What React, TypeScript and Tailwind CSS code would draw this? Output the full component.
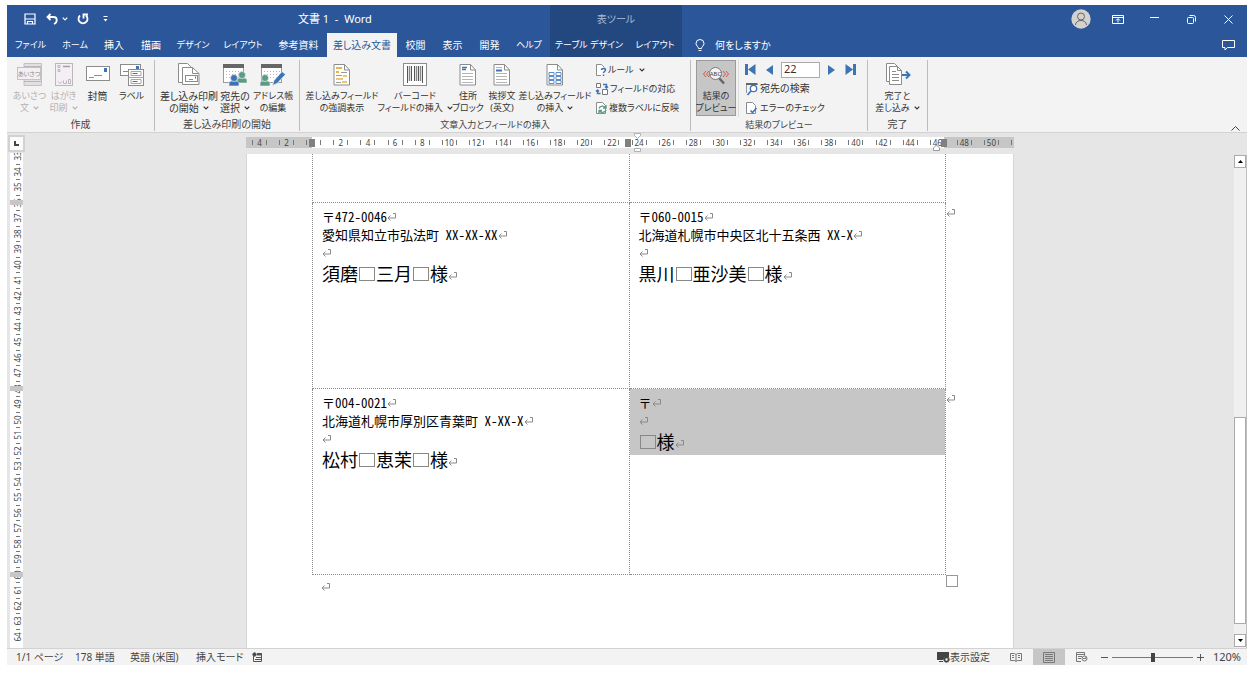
import type { ReactNode } from 'react';

const UI_FONT = "font-['Noto_Sans','Noto_Sans_CJK_JP',sans-serif] [font-feature-settings:'palt']";

/* ---------- shared small glyphs ---------- */

function Caret() {
  return (
    <svg className="ml-1 inline-block shrink-0" width="6" height="4" viewBox="0 0 6 4" fill="none" stroke="currentColor" strokeWidth="1.200">
      <path d="M.7.7 3 3 5.300.7" />
    </svg>
  );
}

function Return() {
  return (
    <svg className="inline-block align-[1px]" width="9" height="8" viewBox="0 0 9 8" fill="none" stroke="#8a8a8a">
      <path d="M6 .5h2.500v4.500H1M3.500 2.500 1 5l2.500 2.500" />
    </svg>
  );
}

function WideSpace() {
  return <span className="mx-px inline-block h-[14px] w-4 border border-[#888] align-baseline" />;
}

/* ---------- ribbon icons ---------- */

function Sheet({ children }: { children?: ReactNode }) {
  return (
    <svg width="18" height="24" viewBox="0 0 18 24" fill="none">
      <path d="M1 1.500h10.500L16.500 7v15H1z" fill="#fff" stroke="#8c8c8c" />
      <path d="M11.500 1.500V7h5" stroke="#8c8c8c" />
      {children}
    </svg>
  );
}

function GreetingIcon() {
  return (
    <svg width="26" height="26" viewBox="0 0 26 26" fill="none">
      <path d="M7 1.500h17.500v22H7z" fill="#e2e0e2" stroke="#c4c0c4" />
      <path d="M7 19.500h17.500M7 4.500h17.500" stroke="#b9b5b9" />
      <rect x=".5" y="5.500" width="23" height="12" fill="#f3eff3" stroke="#c4c0c4" />
      <text x="12" y="14" fontSize="6" textAnchor="middle" fill="#8d878d">あいさつ</text>
    </svg>
  );
}

function PostcardIcon() {
  return (
    <svg width="20" height="26" viewBox="0 0 20 26" fill="none" stroke="#bdb6bd">
      <rect x="1.500" y="1.500" width="17" height="22" fill="#f3eff3" />
      <path d="M4 3.500h2v2H4zM4 7.500h2v2H4z" />
      <path d="M9 4.500h7" stroke="#a59fa5" strokeWidth="1.500" />
      <path d="M4 19.500l2 2 2-2M9.500 18.500v3h3v-3M14.500 17.500h2v4h-2z" />
    </svg>
  );
}

function EnvelopeIcon() {
  return (
    <svg width="24" height="26" viewBox="0 0 24 26" fill="none">
      <rect x=".5" y="4.500" width="23" height="14" fill="#fff" stroke="#8c8c8c" />
      <rect x="18" y="6" width="3" height="4" fill="#3d74b5" />
      <path d="M8 13.500h8M3 15.500h5" stroke="#8c8c8c" />
    </svg>
  );
}

function LabelsIcon() {
  return (
    <svg width="26" height="26" viewBox="0 0 26 26" fill="none">
      <rect x="1.500" y="2.500" width="20" height="11" fill="#fff" stroke="#8c8c8c" />
      <rect x="17" y="4" width="3" height="3" fill="#3d74b5" />
      <path d="M4 9.500h5" stroke="#8c8c8c" />
      <rect x="9.500" y="7.500" width="15" height="16" fill="#fff" stroke="#8c8c8c" />
      <path d="M9.500 15.500h15M12 9.500h10v4H12zM12 17.500h10v4H12z" stroke="#a6a6a6" />
      <path d="M13.500 11.500h5M13.500 19.500h5" stroke="#3d74b5" />
    </svg>
  );
}

function StartMergeIcon() {
  return (
    <svg width="24" height="26" viewBox="0 0 24 26" fill="none" stroke="#8c8c8c">
      <path d="M1.500 1.500h9l4 4v15h-13z" fill="#fff" />
      <path d="M5.500 5.500h10l6.500 6v11H5.500z" fill="#fff" />
      <path d="M15.500 5.500v6H22" />
      <rect x="8.500" y="13.500" width="12" height="6" fill="#fff" />
      <path d="M12 17.500h4" />
      <path d="M18.500 14.500v2" stroke="#3d74b5" />
    </svg>
  );
}

function GridBase() {
  return (
    <>
      <rect x="1.500" y="3.500" width="20" height="17" fill="#fff" stroke="#9a9a9a" />
      <path d="M1 2h21v4H1z" fill="#666" />
      <path d="M4 9.500h16M4 12.500h16M4 15.500h16" stroke="#b5b5b5" strokeDasharray="1 2" />
    </>
  );
}

function Person({ x, y, fill }: { x: number; y: number; fill: string }) {
  return (
    <g fill={fill} stroke="#f3f3f3" strokeWidth=".6" transform={`translate(${x} ${y})`}>
      <path d="M0 12V9.500C0 7.500 1.500 7 3 7h4c1.500 0 3 .5 3 2.500V12z" />
      <circle cx="5" cy="4" r="3.500" />
    </g>
  );
}

function RecipientsIcon() {
  return (
    <svg width="26" height="26" viewBox="0 0 26 26" fill="none">
      <GridBase />
      <Person x={15} y={9} fill="#5a9b81" />
      <Person x={7} y={12} fill="#3d74b5" />
    </svg>
  );
}

function EditListIcon() {
  return (
    <svg width="26" height="26" viewBox="0 0 26 26" fill="none">
      <GridBase />
      <Person x={0} y={12} fill="#5a9b81" />
      <path d="M12.500 23.500l1.500-5 8-9 3.500 3-8.500 9z" fill="#3d74b5" stroke="#f3f3f3" strokeWidth=".7" />
    </svg>
  );
}

function HighlightIcon() {
  return (
    <Sheet>
      <path d="M3 5h6M3 9h3" stroke="#e9b347" strokeWidth="2" />
      <path d="M8 9.500h6M3 12.500h6M3 19.500h5" stroke="#9a9a9a" />
      <path d="M10 13h4M3 16h7M9 19h5" stroke="#e9b347" strokeWidth="1.500" />
    </Sheet>
  );
}

function BarcodeIcon() {
  return (
    <svg width="24" height="26" viewBox="0 0 24 26" fill="none">
      <rect x=".5" y="1.500" width="23" height="22" fill="#fff" stroke="#8c8c8c" />
      <path d="M4.500 4v17M8.500 4v15M11.500 4v15M15.500 4v15M19.500 4v17" stroke="#555" />
      <path d="M6.500 4v15M13.500 4v15M17.500 4v15" stroke="#888" strokeWidth="1.500" />
    </svg>
  );
}

function AddressIcon() {
  return (
    <Sheet>
      <path d="M3 4.500h5M3 6.500h4" stroke="#3d74b5" strokeWidth="1.500" />
      <path d="M3 10.500h11M3 13.500h11M3 16.500h11M3 19.500h11" stroke="#b5b5b5" />
    </Sheet>
  );
}

function GreetingLineIcon() {
  return (
    <Sheet>
      <path d="M3 7.500h6" stroke="#3d74b5" strokeWidth="2" />
      <path d="M3 4.500h6M3 10.500h11M3 13.500h11M3 16.500h11M3 19.500h11" stroke="#b5b5b5" />
    </Sheet>
  );
}

function MergeFieldIcon() {
  return (
    <Sheet>
      <path d="M3 9.500h5v3H3zM10 9.500h5v3h-5zM3 13.500h5v3H3zM10 13.500h5v3h-5zM3 17.500h5v3H3zM10 17.500h5v3h-5z" stroke="#5b8fc9" />
    </Sheet>
  );
}

function PreviewIcon() {
  return (
    <svg width="28" height="26" viewBox="0 0 28 26" fill="none">
      <path d="M4 9 1.500 12 4 15M7 9l-2.500 3L7 15M21 9l2.500 3-2.500 3M24 9l2.500 3-2.500 3" stroke="#e0523f" />
      <path d="M17 16l5 5.500" stroke="#666" strokeWidth="2.500" />
      <circle cx="13.500" cy="11.500" r="6" fill="#f3f3f3" stroke="#777" />
      <text x="13.500" y="14" fontSize="6" textAnchor="middle" fill="#444">ABC</text>
    </svg>
  );
}

function FinishIcon() {
  return (
    <svg width="28" height="26" viewBox="0 0 28 26" fill="none" stroke="#8c8c8c">
      <path d="M2.500 1.500h8l3 3v15h-11z" fill="#fff" />
      <path d="M5.500 4.500h8l4 4v14h-12z" fill="#fff" />
      <path d="M13.500 4.500v4h4M8 9.500h4M8 12.500h7M8 15.500h7M8 18.500h7" />
      <path d="M18 13h7M22 9.500l3.500 3.500-3.500 3.500" stroke="#3d74b5" strokeWidth="2" />
    </svg>
  );
}

function RulesIcon() {
  return (
    <svg className="shrink-0" width="12" height="14" viewBox="0 0 12 14" fill="none">
      <path d="M6 12.500H1.500v-11h5l3 3" fill="#fff" stroke="#8c8c8c" />
      <path d="M6.500 7c0-2 4-2 4 0 0 1.500-2 1.500-2 3M8.500 11.500v1.500" stroke="#3d74b5" strokeWidth="1.500" />
    </svg>
  );
}

function MatchIcon() {
  return (
    <svg className="shrink-0" width="14" height="14" viewBox="0 0 14 14" fill="none">
      <path d="M1.500 1.500h4v4h-4zM7.500 7.500h5v5h-5z" fill="#fff" stroke="#777" />
      <path d="M8 2.500h3.500V6M10 4.500 11.500 6 13 4.500M5.500 11.500h-3V8M1 9.500 2.500 8 4 9.500" stroke="#3d74b5" strokeWidth="1.400" />
    </svg>
  );
}

function UpdateIcon() {
  return (
    <svg className="shrink-0" width="13" height="14" viewBox="0 0 13 14" fill="none">
      <path d="M1.500 1.500h6l3 3v8h-9z" fill="#fff" stroke="#8c8c8c" />
      <path d="M4 7.500c1-3 5-3 6.500-1M11 4v3H8M11 9c-1 3-5 3-6.500 1M4 12.500v-3h3" stroke="#5a9b81" strokeWidth="1.300" />
    </svg>
  );
}

function FindIcon() {
  return (
    <svg className="shrink-0" width="14" height="14" viewBox="0 0 14 14" fill="none">
      <path d="M1.500 11V2.500h11" stroke="#999" />
      <path d="M1 2h11.500" stroke="#666" strokeWidth="2" />
      <circle cx="8.500" cy="6.500" r="3.200" fill="#fff" stroke="#3d74b5" strokeWidth="1.300" />
      <path d="M6 9l-3.500 4" stroke="#3d74b5" strokeWidth="1.700" />
    </svg>
  );
}

function CheckIcon() {
  return (
    <svg className="shrink-0" width="14" height="14" viewBox="0 0 14 14" fill="none">
      <path d="M1.500 1.500h6l3 3v8h-9z" fill="#fff" stroke="#8c8c8c" />
      <path d="M5.500 9.500l2 2L11.500 7" stroke="#3d74b5" strokeWidth="1.600" />
    </svg>
  );
}

/* ---------- title bar and tabs ---------- */

function TitleBar() {
  return (
    <div className="flex h-7 items-center text-white">
      <div className="flex w-[291px] items-center pl-[17px]">
        <button aria-label="上書き保存">
          <svg width="12" height="12" viewBox="0 0 12 12" fill="none" stroke="#fff" strokeWidth="1.200">
            <path d="M1 1h10v10H1zM1 6h10M3.500 11V8.500h5V11" />
          </svg>
        </button>
        <button aria-label="元に戻す" className="ml-[10px] flex items-center">
          <svg width="12" height="12" viewBox="0 0 12 12" fill="none" stroke="#fff" strokeWidth="1.800">
            <path d="M4.500 1 1.500 4l3 3M1.500 4h6c4.500 0 4 5.500.5 7" />
          </svg>
          <Caret />
        </button>
        <button aria-label="やり直し" className="ml-[9px]">
          <svg width="12" height="12" viewBox="0 0 12 12" fill="none" stroke="#fff" strokeWidth="1.800">
            <path d="M3 2.500a4.500 4.500 0 1 0 6 0M6.500 5.500V1.500H11" />
          </svg>
        </button>
        <button aria-label="クイック アクセス ツール バーのユーザー設定" className="ml-[14px]">
          <svg width="5" height="6" viewBox="0 0 5 6" fill="#fff">
            <path d="M.5 0h4v1h-4zM.5 3h4l-2 2.500z" />
          </svg>
        </button>
      </div>
      <h1 className="w-[252px] text-[11px] whitespace-pre">文書 1  -  Word</h1>
      <div className="flex h-full w-[132px] items-center justify-center bg-[#23477f] text-[10px] text-[#a9bbd8]">表ツール</div>
      <div className="ml-auto flex items-center pr-[14px]">
        <button aria-label="アカウント" className="mr-[21px]">
          <svg width="20" height="20" viewBox="0 0 20 20" fill="none">
            <circle cx="10" cy="10" r="9.700" fill="#d4d2d0" />
            <circle cx="10" cy="7.500" r="3.500" stroke="#666" />
            <path d="M4.500 16c0-6 11-6 11 0" stroke="#666" />
          </svg>
        </button>
        <button aria-label="リボンの表示オプション" className="mr-[26px]">
          <svg width="12" height="9" viewBox="0 0 12 9" fill="none" stroke="#fff">
            <path d="M.5.5h11v8H.5zM.5 2.500h11M6 7.500V4M4 5.500l2-2 2 2" />
          </svg>
        </button>
        <button aria-label="最小化" className="mr-7">
          <svg width="9" height="9" viewBox="0 0 9 9" stroke="#fff"><path d="M0 2.500h9" /></svg>
        </button>
        <button aria-label="元に戻す (縮小)" className="mr-7">
          <svg width="9" height="9" viewBox="0 0 9 9" fill="none" stroke="#fff">
            <rect x=".5" y="2.500" width="6" height="6" rx="1" />
            <path d="M2.500.5h4a2 2 0 0 1 2 2v4" />
          </svg>
        </button>
        <button aria-label="閉じる">
          <svg width="9" height="9" viewBox="0 0 9 9" stroke="#fff"><path d="M.5.5l8 8M8.500.5l-8 8" /></svg>
        </button>
      </div>
    </div>
  );
}

const TABS = [
  { label: 'ファイル', width: 'w-[47px]', kana: true },
  { label: 'ホーム', width: 'w-[42px]', kana: true },
  { label: '挿入', width: 'w-[36px]' },
  { label: '描画', width: 'w-[38px]' },
  { label: 'デザイン', width: 'w-[46px]', kana: true },
  { label: 'レイアウト', width: 'w-[54px]', kana: true },
  { label: '参考資料', width: 'w-[57px]' },
  { label: '差し込み文書', width: 'w-[70px]', active: true },
  { label: '校閲', width: 'w-[37px]' },
  { label: '表示', width: 'w-[37px]' },
  { label: '開発', width: 'w-[37px]' },
  { label: 'ヘルプ', width: 'w-[42px]', kana: true },
  { label: 'テーブル デザイン', width: 'w-[78px]', context: true, kana: true },
  { label: 'レイアウト', width: 'w-[54px]', context: true, kana: true },
];

function TabRow() {
  return (
    <nav className="flex h-6 text-[10px] text-white">
      {TABS.map((tab, i) => (
        <button
          key={i}
          className={`${tab.width} ${tab.kana ? 'text-[9px]' : 'text-[10px]'} flex shrink-0 items-center justify-center whitespace-nowrap ${
            tab.active ? 'bg-[#f3f3f3] text-[#2b579a]' : tab.context ? 'bg-[#23477f]' : ''
          }`}
        >
          {tab.label}
        </button>
      ))}
      <button className="ml-[13px] flex items-center gap-[10px] whitespace-nowrap">
        <svg width="10" height="13" viewBox="0 0 10 13" fill="none" stroke="#fff">
          <path d="M3.500 9.500C3.500 7.500 1 7 1 4.500a4 4 0 0 1 8 0c0 2.500-2.500 3-2.500 5zM3.500 11.500h3" />
        </svg>
        何をしますか
      </button>
      <button aria-label="コメント" className="mr-3 ml-auto">
        <svg width="13" height="12" viewBox="0 0 13 12" fill="none" stroke="#fff">
          <path d="M.5 1.500h12v7h-7l-2.500 2.500v-2.500H.5z" />
        </svg>
      </button>
    </nav>
  );
}

/* ---------- ribbon ---------- */

interface BigButtonProps {
  icon: ReactNode;
  lines: string[];
  width: string;
  kana?: boolean;
  caret?: boolean;
  disabled?: boolean;
  pressed?: boolean;
}

function BigButton({ icon, lines, width, kana, caret, disabled, pressed }: BigButtonProps) {
  return (
    <button
      disabled={disabled}
      className={`${width} ${kana ? 'text-[9px]' : 'text-[10px]'} flex h-[56px] shrink-0 flex-col items-center border ${
        pressed ? 'border-[#9a9a9a] bg-[#c6c6c6]' : 'border-transparent'
      } ${disabled ? 'text-[#b5b1b5]' : 'text-[#333]'}`}
    >
      <span className="mt-px mb-[2px] flex h-[26px] items-center">{icon}</span>
      {lines.map((line, i) => (
        <span key={line} className="flex h-3 items-center leading-3 whitespace-nowrap">
          {line}
          {caret && i === lines.length - 1 && <Caret />}
        </span>
      ))}
    </button>
  );
}

function SmallButton({ icon, label, kana, caret }: { icon: ReactNode; label: string; kana?: boolean; caret?: boolean }) {
  return (
    <button className={`${kana ? 'text-[9px]' : 'text-[10px]'} flex h-[19px] items-center gap-px whitespace-nowrap text-[#333]`}>
      {icon}
      {label}
      {caret && <Caret />}
    </button>
  );
}

function Group({ label, width, kana, children }: { label: string; width: string; kana?: boolean; children: ReactNode }) {
  return (
    <section className={`${width} flex shrink-0 flex-col border-r border-[#bdbdbd]`}>
      <div className="flex h-[58px] justify-center">{children}</div>
      <h2 className={`${kana ? 'text-[9px]' : 'text-[10px]'} pt-px text-center leading-[14px] text-[#444]`}>{label}</h2>
    </section>
  );
}

function Ribbon() {
  return (
    <div className="flex h-[76px] border-b border-[#d2d2d2] bg-[#f3f3f3] pt-[3px] pb-[1px]">
      <Group label="作成" width="w-[148px]">
        <BigButton icon={<GreetingIcon />} lines={['あいさつ', '文']} width="w-[34px]" kana caret disabled />
        <BigButton icon={<PostcardIcon />} lines={['はがき', '印刷']} width="w-[34px]" kana caret disabled />
        <BigButton icon={<EnvelopeIcon />} lines={['封筒']} width="w-[34px]" />
        <BigButton icon={<LabelsIcon />} lines={['ラベル']} width="w-[34px]" kana />
      </Group>
      <Group label="差し込み印刷の開始" width="w-[145px]">
        <BigButton icon={<StartMergeIcon />} lines={['差し込み印刷', 'の開始']} width="w-[58px]" caret />
        <BigButton icon={<RecipientsIcon />} lines={['宛先の', '選択']} width="w-[34px]" caret />
        <BigButton icon={<EditListIcon />} lines={['アドレス帳', 'の編集']} width="w-[42px]" kana />
      </Group>
      <Group label="文章入力とフィールドの挿入" width="w-[391px]" kana>
        <BigButton icon={<HighlightIcon />} lines={['差し込みフィールド', 'の強調表示']} width="w-[74px]" kana />
        <BigButton icon={<BarcodeIcon />} lines={['バーコード', 'フィールドの挿入']} width="w-[72px]" kana caret />
        <BigButton icon={<AddressIcon />} lines={['住所', 'ブロック']} width="w-[34px]" kana />
        <BigButton icon={<GreetingLineIcon />} lines={['挨拶文', '(英文)']} width="w-[34px]" kana />
        <BigButton icon={<MergeFieldIcon />} lines={['差し込みフィールド', 'の挿入']} width="w-[72px]" kana caret />
        <div className="flex w-[94px] flex-col pl-1">
          <SmallButton icon={<RulesIcon />} label="ルール" kana caret />
          <SmallButton icon={<MatchIcon />} label="フィールドの対応" kana />
          <SmallButton icon={<UpdateIcon />} label="複数ラベルに反映" kana />
        </div>
      </Group>
      <Group label="結果のプレビュー" width="w-[177px]" kana>
        <BigButton icon={<PreviewIcon />} lines={['結果の', 'プレビュー']} width="w-[40px]" kana pressed />
        <div className="ml-[2px] flex w-[124px] flex-col border-l border-[#dcdcdc] pl-[6px]">
          <div className="flex h-[19px] items-center">
            <button aria-label="先頭のレコード">
              <svg width="11" height="11" viewBox="0 0 11 11" fill="#3d74b5"><path d="M0 0h3v11H0zM10.500 0v11L3 5.500z" /></svg>
            </button>
            <button aria-label="前のレコード" className="ml-[10px]">
              <svg width="7" height="10" viewBox="0 0 7 10" fill="#3d74b5"><path d="M7 0v10L0 5z" /></svg>
            </button>
            <input
              aria-label="レコード"
              defaultValue="22"
              className="mx-2 h-4 w-[39px] border border-[#ababab] bg-white px-[2px] text-[11px] text-[#333]"
            />
            <button aria-label="次のレコード">
              <svg width="7" height="10" viewBox="0 0 7 10" fill="#3d74b5"><path d="M0 0v10l7-5z" /></svg>
            </button>
            <button aria-label="最後のレコード" className="ml-[10px]">
              <svg width="11" height="11" viewBox="0 0 11 11" fill="#3d74b5"><path d="M8 0h3v11H8zM.5 0v11L8 5.500z" /></svg>
            </button>
          </div>
          <SmallButton icon={<FindIcon />} label="宛先の検索" />
          <SmallButton icon={<CheckIcon />} label="エラーのチェック" kana />
        </div>
      </Group>
      <Group label="完了" width="w-[60px]">
        <BigButton icon={<FinishIcon />} lines={['完了と', '差し込み']} width="w-[50px]" kana caret />
      </Group>
      <button aria-label="リボンを折りたたむ" className="mr-[7px] ml-auto flex items-end">
        <svg width="9" height="5" viewBox="0 0 9 5" fill="none" stroke="#444"><path d="M.5 4.500l4-4 4 4" /></svg>
      </button>
    </div>
  );
}

/* ---------- rulers ---------- */

const COLUMN_MARKS = Array.from({ length: 28 }, (_, i) => Math.abs(i * 2 - 4));
const LINE_MARKS = Array.from({ length: 32 }, (_, i) => i + 33);

function HorizontalRuler() {
  return (
    <div className="relative mx-auto h-[11px] w-[768px] bg-[linear-gradient(to_right,#c6c6c6_66px,#fff_66px,#fff_698px,#c6c6c6_698px)] text-[8px] leading-[11px] text-[#444]">
      <div className="flex">
        <div className="grid w-[759px] shrink-0 grid-cols-[repeat(28,minmax(0,1fr))]">
          {COLUMN_MARKS.map((n, i) => (
            <div key={i} className="flex items-center justify-center">
              <i className="h-[5px] w-px bg-[#777]" />
              <span className="w-[13px] text-center">{n === 0 ? '' : n}</span>
              <i className="h-[5px] w-px bg-[#777]" />
            </div>
          ))}
        </div>
        <i className="mt-[3px] ml-[6px] h-[5px] w-px bg-[#777]" />
      </div>
      <span className="absolute top-[2px] left-[63px] h-2 w-[6px] bg-[#808080]" />
      <span className="absolute top-[2px] left-[379px] h-2 w-[6px] bg-[#808080]" />
      <span className="absolute top-[2px] left-[695px] h-2 w-[6px] bg-[#808080]" />
      <svg className="absolute top-[-4px] left-[387px]" width="9" height="20" viewBox="0 0 9 20" fill="#fff" stroke="#b0b0b0">
        <path d="M1.500.5h6v2l-3 3-3-3zM1.500 15.500h6v3h-6z" />
      </svg>
      <svg className="absolute top-[7px] left-[686px]" width="9" height="8" viewBox="0 0 9 8" fill="#fff" stroke="#999">
        <path d="M1.500 6.500V4l3-3 3 3v2.500z" />
      </svg>
    </div>
  );
}

function VerticalRuler() {
  return (
    <div className="relative ml-[3px] w-[13px] flex-1 overflow-hidden bg-white text-[8px] text-[#444]">
      <div className="mt-[-5px] grid h-[496px] grid-rows-[repeat(32,minmax(0,1fr))] pl-[2px]">
        {LINE_MARKS.map((n) => (
          <div key={n} className="flex min-h-0 flex-col items-center">
            <i className="h-px w-1 shrink-0 bg-[#777]" />
            <span className="flex min-h-0 flex-1 rotate-180 items-center justify-center leading-3 [writing-mode:vertical-rl]">{n}</span>
          </div>
        ))}
      </div>
      <span className="absolute top-[47px] left-0 h-[5px] w-full bg-[#c6c6c6]" />
      <span className="absolute top-[233px] left-0 h-[5px] w-full bg-[#c6c6c6]" />
      <span className="absolute top-[419px] left-0 h-[5px] w-full bg-[#c6c6c6]" />
    </div>
  );
}

/* ---------- document ---------- */

interface LabelData {
  code: string;
  address?: string;
  names: string[];
  selected?: boolean;
}

const LABELS: LabelData[][] = [
  [
    { code: '472-0046', address: '愛知県知立市弘法町 XX-XX-XX', names: ['須磨', '三月'] },
    { code: '060-0015', address: '北海道札幌市中央区北十五条西 XX-X', names: ['黒川', '亜沙美'] },
  ],
  [
    { code: '004-0021', address: '北海道札幌市厚別区青葉町 X-XX-X', names: ['松村', '恵茉'] },
    { code: '', names: [''], selected: true },
  ],
];

const CELL = 'border border-dotted border-[#8c8c8c] p-0 align-top';

function Label({ code, address, names, selected }: LabelData) {
  return (
    <div className={`px-[9px] pt-[5px] pb-[3px] text-[13px] leading-[18px] ${selected ? 'bg-[#c6c6c6]' : ''}`}>
      <p className="h-[18px]">〒{code}<Return /></p>
      {address && <p className="h-[18px]">{address}<Return /></p>}
      <p className="h-[18px]"><Return /></p>
      <p className="h-[22px] text-lg leading-[22px]">
        {names.map((name) => (
          <span key={name}>{name}<WideSpace /></span>
        ))}
        様<Return />
      </p>
    </div>
  );
}

function Paper() {
  return (
    <main className="mx-auto w-[768px] flex-1 border-x border-[#d6d6d6] bg-white pl-[65px] font-['Noto_Sans_CJK_JP',sans-serif] text-black [font-feature-settings:'hwid']">
      <div className="relative w-[634px]">
        <table className="w-[634px] table-fixed border-collapse">
          <tbody>
            <tr className="h-[48px]">
              <td className={`${CELL} border-t-0`} />
              <td className={`${CELL} border-t-0`} />
            </tr>
            {LABELS.map((row, i) => (
              <tr key={i} className="h-[186px]">
                {row.map((label) => (
                  <td key={label.code} className={CELL}><Label {...label} /></td>
                ))}
              </tr>
            ))}
          </tbody>
        </table>
        <span className="absolute top-[48px] left-full leading-[18px]"><Return /></span>
        <span className="absolute top-[234px] left-full leading-[18px]"><Return /></span>
        <span className="absolute top-full left-full h-3 w-3 border border-[#999] bg-white" />
      </div>
      <p className="pl-[9px] text-[13px] leading-[24px]"><Return /></p>
    </main>
  );
}

function ScrollBar() {
  return (
    <div className="mt-[22px] flex w-[13px] flex-col border-r border-[#c0c0c0] bg-[#f0f0f0]">
      <button aria-label="上へスクロール" className="flex h-[13px] items-center justify-center border border-[#ababab] bg-white">
        <svg width="5" height="3" viewBox="0 0 5 3"><path d="M0 3 2.500 0 5 3z" /></svg>
      </button>
      <div className="grow-[251]" />
      <div className="grow-[206] border border-[#ababab] bg-white" />
      <div className="grow-[10]" />
      <button aria-label="下へスクロール" className="mb-px flex h-[13px] items-center justify-center border border-[#ababab] bg-white">
        <svg width="5" height="3" viewBox="0 0 5 3"><path d="M0 0l2.500 3L5 0z" /></svg>
      </button>
    </div>
  );
}

function Workspace() {
  return (
    <div className="flex flex-1 bg-[#e6e6e6]">
      <div className="flex w-[19px] flex-col">
        <button aria-label="タブの種類" className="mt-[2px] mb-px ml-px flex h-[17px] w-[17px] items-center justify-center border-2 border-[#d2d2d2] bg-[#fafafa]">
          <svg width="5" height="5" viewBox="0 0 5 5" fill="none" stroke="#444" strokeWidth="2"><path d="M1 0v4h4" /></svg>
        </button>
        <VerticalRuler />
      </div>
      <div className="flex min-w-0 flex-1 flex-col">
        <div className="h-[21px] pt-1"><HorizontalRuler /></div>
        <Paper />
      </div>
      <ScrollBar />
    </div>
  );
}

/* ---------- status bar ---------- */

function StatusBar() {
  return (
    <footer className="flex h-[17px] items-center border-t border-[#d2d2d2] bg-[#f3f3f3] pl-[9px] text-[10px] whitespace-nowrap text-[#444]">
      <button className="w-[59px] text-left">1/1 ページ</button>
      <button className="w-[55px] text-left">178 単語</button>
      <button className="w-[66px] text-left">英語 (米国)</button>
      <button className="w-[56px] text-left">挿入モード</button>
      <button aria-label="マクロの記録">
        <svg width="11" height="10" viewBox="0 0 11 10" fill="none" stroke="#555">
          <path d="M1.500 4v5.500h8v-8H5M4 5.500h5M3 7.500h6" />
          <path d="M5 2.500h5" strokeWidth="2" />
          <circle cx="2.500" cy="2.500" r="1.700" fill="#444" />
        </svg>
      </button>
      <button className="mr-5 ml-auto flex items-center">
        <svg width="13" height="12" viewBox="0 0 13 12" fill="none">
          <path d="M0 1h12v5H8L6 9H0z" fill="#444" />
          <path d="M2 10.500h4" stroke="#444" />
          <circle cx="9.500" cy="8.500" r="2" stroke="#444" strokeWidth="1.500" />
          <circle cx="9.500" cy="8.500" r="3" stroke="#444" strokeDasharray="1 1.300" />
        </svg>
        表示設定
      </button>
      <button aria-label="閲覧モード" className="mr-[11px]">
        <svg width="12" height="10" viewBox="0 0 12 10" fill="none" stroke="#777">
          <path d="M.5 1.500h4L6 2.500l1.500-1h4v7h-4L6 9.500l-1.500-1h-4zM6 2.500v7M2 3.500h2M2 5.500h2M8 3.500h2M8 5.500h2" />
        </svg>
      </button>
      <button aria-label="印刷レイアウト" className="flex h-full w-8 items-center justify-center bg-[#c6c6c6]">
        <svg width="12" height="11" viewBox="0 0 12 11" fill="none" stroke="#777">
          <path d="M.5.500h11v10H.5zM2 2.500h8M2 4.500h8M2 6.500h8M2 8.500h8" />
        </svg>
      </button>
      <button aria-label="Web レイアウト" className="ml-[11px]">
        <svg width="12" height="10" viewBox="0 0 12 10" fill="none" stroke="#777">
          <path d="M5 9.500H.5v-9h8v3M.5 2.500h8M2 4.500h4M2 6.500h3" />
          <circle cx="8.500" cy="6.500" r="2.500" fill="#f3f3f3" />
          <path d="M7 6.500h3v-2" />
        </svg>
      </button>
      <button aria-label="縮小" className="ml-[13px]">
        <svg width="7" height="7" viewBox="0 0 7 7" stroke="#555"><path d="M0 3.500h7" /></svg>
      </button>
      <input
        type="range"
        aria-label="ズーム"
        min={10}
        max={230}
        defaultValue={122}
        className="mx-1 h-3 w-[81px] appearance-none bg-[linear-gradient(#777,#777)] bg-[length:100%_1px] bg-center bg-no-repeat [&::-webkit-slider-thumb]:h-[9px] [&::-webkit-slider-thumb]:w-[4px] [&::-webkit-slider-thumb]:appearance-none [&::-webkit-slider-thumb]:bg-[#444]"
      />
      <button aria-label="拡大">
        <svg width="7" height="7" viewBox="0 0 7 7" stroke="#555"><path d="M0 3.500h7M3.500 0v7" /></svg>
      </button>
      <button className="ml-[6px] w-[37px] pr-[6px] text-right text-[11px]">120%</button>
    </footer>
  );
}

export default function App() {
  return (
    <div className="min-h-screen bg-white">
      <div className={`flex min-h-screen flex-col pt-[5px] pr-[9px] pb-[9px] pl-[7px] ${UI_FONT}`}>
        <header className="bg-[#2b579a]">
          <TitleBar />
          <TabRow />
        </header>
        <Ribbon />
        <Workspace />
        <StatusBar />
      </div>
    </div>
  );
}
